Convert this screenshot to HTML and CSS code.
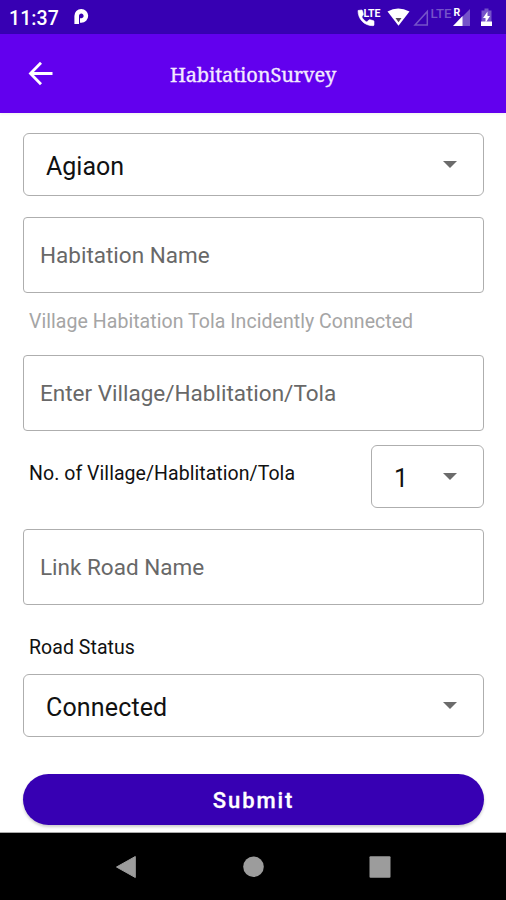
FILE: index.html
```
<!DOCTYPE html>
<html lang="en">
<head>
<meta charset="utf-8">
<title>HabitationSurvey</title>
<link rel="stylesheet" href="styles.css">
</head>
<body>
<div class="status">
  <span class="clock">11:37</span>
  <svg class="parking" width="18" height="20" viewBox="0 0 18 20"><path d="M4.700 16V8a4.600 4.600 0 1 1 4.600 4.500H8" fill="none" stroke="#fff" stroke-width="4.600" stroke-linejoin="round"/></svg>
  <svg class="signals" width="146" height="34" viewBox="0 0 146 34">
    <path d="M1 10.500 4.500 10c.5 0 .8.3 1 .8l.8 3.400c0 .4-.1.700-.4 1L4.800 17c1.300 2.300 2.600 3.700 5 5l2-2c.3-.3.700-.4 1.100-.3l3.300.9c.5.1.8.5.8.9v3.200c0 .7-.4 1-1 1C7 25.700 1 19 1 10.500z" fill="#fff" stroke="#fff" stroke-width=".6"/>
    <text class="lte" x="6.500" y="16.500" textLength="17" lengthAdjust="spacingAndGlyphs">LTE</text>
    <path d="M30.500 11.600Q41 5.500 52.500 11.600L41.500 25.800z" fill="#fff"/><path d="M38.500 18h6l-3 4.200z" fill="#554a55"/>
    <path d="M58 25 70.300 11.500V25z" fill="none" stroke="#7553c9" stroke-width="1.500"/>
    <text class="lte muted" x="73.500" y="17.800" textLength="21" lengthAdjust="spacingAndGlyphs">LTE</text>
    <path d="M105 17 113 9v17h-8z" fill="#7553c9"/><path d="M96 26l9.500-10v10z" fill="#fff"/>
    <text class="roaming" x="96.500" y="15.800">R</text>
    <path d="M124.500 10.500h3V8.500h4v2h3V26h-10z" fill="#7553c9"/><path d="M124 21.500h11V26h-11z" fill="#fff"/><path d="M130.500 11.500 126 18h2.500v5l4.500-7h-2.500z" fill="#fff"/>
  </svg>
</div>
<header class="appbar">
  <svg class="back" width="26" height="26" viewBox="0 0 26 26"><path d="M25.500 12.500H3.500M14 1.800 3.500 12.500 14 23.200" fill="none" stroke="#fff" stroke-width="2.800"/></svg>
  <h1 class="title">HabitationSurvey</h1>
</header>
<main class="form">
  <div class="box select"><span>Agiaon</span><i class="caret"></i></div>
  <div class="box field"><span>Habitation Name</span></div>
  <div class="label hint">Village Habitation Tola Incidently Connected</div>
  <div class="box field"><span>Enter Village/Hablitation/Tola</span></div>
  <div class="row">
    <div class="label count">No. of Village/Hablitation/Tola</div>
    <div class="box select small"><span>1</span><i class="caret"></i></div>
  </div>
  <div class="box field link"><span>Link Road Name</span></div>
  <div class="label road">Road Status</div>
  <div class="box select connected"><span>Connected</span><i class="caret"></i></div>
  <button class="submit">Submit</button>
</main>
<nav class="nav">
  <svg width="22" height="24" viewBox="0 0 22 24"><path d="M20.300 1.500v21L1.500 12z" fill="#9c9c9c" stroke="#9c9c9c" stroke-linejoin="round"/></svg>
  <svg width="22" height="24" viewBox="0 0 22 24"><circle cx="11.500" cy="11.800" r="10.300" fill="#9c9c9c"/></svg>
  <svg width="22" height="24" viewBox="0 0 22 24"><rect x=".5" y="1.200" width="21" height="21.500" rx="1" fill="#9c9c9c"/></svg>
</nav>
</body>
</html>
```
FILE: styles.css
```
* { box-sizing: border-box; }
body { margin: 0; width: 506px; height: 900px; overflow: hidden; display: flex; flex-direction: column; background: #fff; font-family: Roboto, sans-serif; color: #111; }
.status { height: 34px; background: #3700b3; display: flex; align-items: center; padding-left: 9px; color: #fff; flex: none; }
.clock { font-size: 19.500px; font-weight: 500; line-height: 34px; width: 63px; padding-top: 3px; letter-spacing: .1px; }
.parking { margin-top: 2px; }
.signals { margin-left: auto; margin-right: 3px; }
.lte { font: 700 10px Roboto, sans-serif; fill: #fff; }
.lte.muted { font-size: 13px; font-weight: 500; fill: #7553c9; }
.roaming { font: 700 10.500px Roboto, sans-serif; fill: #fff; }
.appbar { height: 79px; background: #6200ee; display: flex; align-items: center; padding-left: 27px; flex: none; box-shadow: 0 1px 3px #0001; }
.title { margin: 2px 0 0 117px; font: 400 20px "Noto Serif", "DejaVu Serif Condensed", "DejaVu Serif", serif; letter-spacing: -.15px; color: #f3e9ff; -webkit-text-stroke: .3px #f3e9ff; white-space: nowrap; }
.form { height: 720px; padding: 20px 22px 0 23px; flex: none; border-bottom: 1px solid #aaa; }
.box { border: 1.500px solid #aeaeae; border-radius: 6px; display: flex; align-items: center; white-space: nowrap; }
.select { height: 63px; padding: 3px 26px 0 22px; justify-content: space-between; font-size: 25px; }
.connected { letter-spacing: .15px; }
.caret { width: 0; height: 0; border: 7px solid transparent; border-top-color: #6b6b6b; border-bottom: 0; margin-top: -3px; }
.field { height: 76px; margin-top: 21px; padding-left: 16px; font-size: 22.500px; color: #686868; border-radius: 4px; }
.label { font-size: 19.500px; line-height: 24px; padding-left: 6px; letter-spacing: .05px; white-space: nowrap; }
.hint { margin-top: 17px; color: #a5a5a5; }
.hint + .field { margin-top: 21px; }
.row { display: flex; justify-content: space-between; margin-top: 14px; }
.count { margin-top: 17px; }
.small { width: 113px; }
.road { margin: 31px 0 14px; }
.submit { display: block; width: 461px; height: 51px; margin-top: 37px; padding: 2px 0 0; border: 0; border-radius: 26px; background: #3700b3; color: #fff; font: 500 22px Roboto, sans-serif; letter-spacing: 1.900px; -webkit-text-stroke: .3px #fff; box-shadow: 0 2px 3px #0003; }
.nav { height: 67px; background: #000; display: flex; align-items: center; justify-content: center; gap: 105px; flex: none; }
```
